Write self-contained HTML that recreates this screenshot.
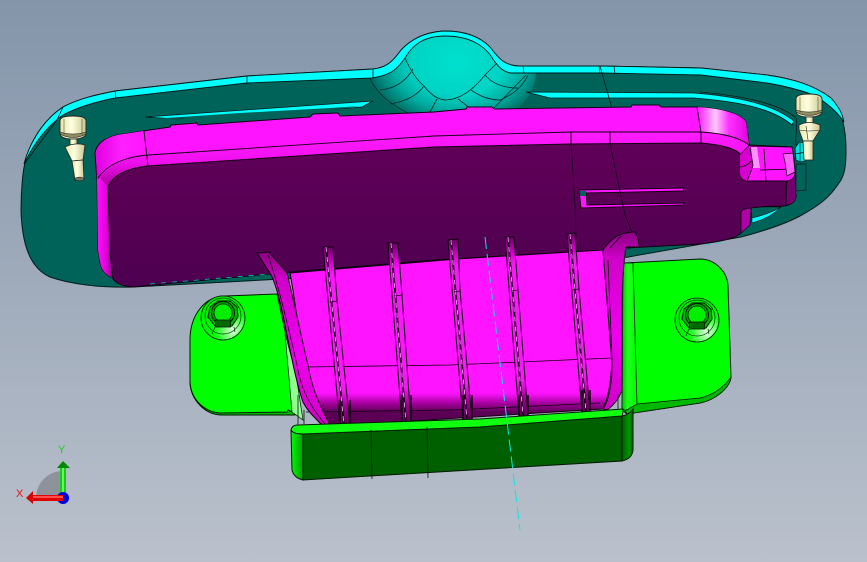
<!DOCTYPE html>
<html><head><meta charset="utf-8"><style>
html,body{margin:0;padding:0;width:867px;height:562px;overflow:hidden;background:#9aa7b8}
svg{display:block}
text{font-family:"Liberation Sans",sans-serif}
</style></head><body>
<svg width="867" height="562" viewBox="0 0 867 562" xmlns="http://www.w3.org/2000/svg">
<defs>
<linearGradient id="bg" x1="0" y1="0" x2="0" y2="1"><stop offset="0" stop-color="#8495aa"/><stop offset="1" stop-color="#bac1cc"/></linearGradient>
<radialGradient id="dome" gradientUnits="userSpaceOnUse" cx="458" cy="62" r="92" gradientTransform="translate(458 62) scale(1 .72) translate(-458 -62)"><stop offset="0" stop-color="#00e0ce"/><stop offset=".5" stop-color="#00d4c4"/><stop offset=".72" stop-color="#00aea2"/><stop offset="1" stop-color="#00635a"/></radialGradient>
<linearGradient id="purple" x1="0" y1="0" x2="0" y2="1"><stop offset="0" stop-color="#600058"/><stop offset="1" stop-color="#4e0050"/></linearGradient>
<linearGradient id="mainm" gradientUnits="userSpaceOnUse" x1="0" y1="385" x2="0" y2="412"><stop offset="0" stop-color="#ff14ff"/><stop offset=".3" stop-color="#ff14ff"/><stop offset=".7" stop-color="#a00098"/><stop offset="1" stop-color="#5c0056"/></linearGradient>
<linearGradient id="rimlow" x1="0" y1="0" x2="0" y2="1"><stop offset="0" stop-color="#ff1cff"/><stop offset=".55" stop-color="#f010ee"/><stop offset="1" stop-color="#a80098"/></linearGradient>
<linearGradient id="hi" gradientUnits="userSpaceOnUse" x1="697" y1="0" x2="750" y2="0"><stop offset="0" stop-color="#ff14ff"/><stop offset=".35" stop-color="#ffc8ff"/><stop offset=".6" stop-color="#ff30ff"/><stop offset="1" stop-color="#e000e0"/></linearGradient>
<linearGradient id="hiL" gradientUnits="userSpaceOnUse" x1="96" y1="0" x2="148" y2="0"><stop offset="0" stop-color="#e000e0"/><stop offset=".5" stop-color="#ff20ff"/><stop offset="1" stop-color="#ff14ff"/></linearGradient>
<radialGradient id="hiS" cx=".55" cy=".5" r=".5"><stop offset="0" stop-color="#ff70ff"/><stop offset="1" stop-color="#ff14ff"/></radialGradient>
<linearGradient id="side" gradientUnits="userSpaceOnUse" x1="96" y1="0" x2="112" y2="0"><stop offset="0" stop-color="#ff14ff"/><stop offset=".6" stop-color="#e800e0"/><stop offset="1" stop-color="#8a0088"/></linearGradient>
<linearGradient id="rib" x1="0" y1="0" x2="0" y2="1"><stop offset="0" stop-color="#680060"/><stop offset=".1" stop-color="#e000d8"/><stop offset=".15" stop-color="#ff14ff"/><stop offset=".8" stop-color="#ff14ff"/><stop offset=".9" stop-color="#9c0090"/><stop offset="1" stop-color="#5c0056"/></linearGradient>
<linearGradient id="fin" x1="0" y1="0" x2="0" y2="1"><stop offset="0" stop-color="#8a0080"/><stop offset=".15" stop-color="#d000c8"/><stop offset=".6" stop-color="#f000f0"/><stop offset="1" stop-color="#d000c8"/></linearGradient>
<linearGradient id="lipL" gradientUnits="userSpaceOnUse" x1="291" y1="0" x2="304" y2="0"><stop offset="0" stop-color="#00ff00"/><stop offset="1" stop-color="#009000"/></linearGradient>
<linearGradient id="lipR" gradientUnits="userSpaceOnUse" x1="622" y1="0" x2="633" y2="0"><stop offset="0" stop-color="#006000"/><stop offset=".7" stop-color="#009800"/><stop offset="1" stop-color="#005000"/></linearGradient>
<linearGradient id="flW" gradientUnits="userSpaceOnUse" x1="623" y1="0" x2="635" y2="0"><stop offset="0" stop-color="#00d000"/><stop offset=".4" stop-color="#20ff20"/><stop offset="1" stop-color="#00ff00"/></linearGradient>
<linearGradient id="bolt" x1="0" y1="0" x2="1" y2="0"><stop offset="0" stop-color="#e8e6a8"/><stop offset=".45" stop-color="#ffffe0"/><stop offset="1" stop-color="#c8c68c"/></linearGradient>
<radialGradient id="wash" cx=".72" cy=".78" r=".7"><stop offset="0" stop-color="#e8ffe8"/><stop offset=".3" stop-color="#70ff70"/><stop offset=".6" stop-color="#00ff00"/><stop offset="1" stop-color="#00ee00"/></radialGradient>
<clipPath id="teal"><path d="M21 210C21 190 23 170 25 163C28 148 40 122 63 107C80 98 100 94 115 91L247 76L373 69C385 68 392 62 398 54C405 44 420 32 445 31C470 31 483 40 490 47C497 56 503 66 520 66L601 66L701 68L767 75C795 79 815 86 831 98C842 110 846 130 846 150C846 165 845 175 839 183C830 197 820 205 800 216C785 224 760 232 741 237L600 262L133 287C100 288 70 284 50 277C30 268 22 245 21 210Z"/></clipPath>
<g id="hb"><circle cx="0" cy="0" r="22" fill="url(#wash)" stroke="#002800" stroke-width=".8"/><path d="M-11 16L-8 9M11 9L12 14" stroke="#002800" stroke-width=".7"/>
<circle cx="0" cy="-2" r="18" fill="none" stroke="#004000" stroke-width=".7"/>
<path d="M-15 -1L-13 -11L-5 -17L7 -17L14 -11L15 -1L9 8L-8 8Z" fill="#00b800" stroke="#001a00" stroke-width="1"/>
<circle cx="0" cy="-5" r="11.5" fill="#00a000" stroke="#001a00" stroke-width="1"/>
<circle cx="0" cy="-5" r="9" fill="#00f000" stroke="#002000" stroke-width=".8"/>
<rect x="-7.5" y="2" width="15" height="7" fill="#006a00" stroke="#001800" stroke-width=".8"/></g>
<g id="yh"><path d="M-13 -7Q-13 -12 0 -12Q13 -12 13 -7L13 5Q13 11 0 11Q-13 11 -13 5Z" fill="url(#bolt)" stroke="#222" stroke-width=".9"/>
<path d="M-13 4Q0 8 13 4L13 6Q0 13 -13 6Z" fill="#8e8c60" stroke="#222" stroke-width=".6"/><path d="M-9 -9L-9 6M9 -9L9 6" stroke="#333" stroke-width=".5" fill="none"/></g>
</defs>
<rect width="867" height="562" fill="url(#bg)"/>

<!-- teal body -->
<path d="M21 210C21 190 23 170 25 163C28 148 40 122 63 107C80 98 100 94 115 91L247 76L373 69C385 68 392 62 398 54C405 44 420 32 445 31C470 31 483 40 490 47C497 56 503 66 520 66L601 66L701 68L767 75C795 79 815 86 831 98C842 110 846 130 846 150C846 165 845 175 839 183C830 197 820 205 800 216C785 224 760 232 741 237L600 262L133 287C100 288 70 284 50 277C30 268 22 245 21 210Z" fill="#00635a" stroke="#001a1a" stroke-width="1"/>
<!-- dome -->
<g clip-path="url(#teal)"><ellipse cx="452" cy="72" rx="84" ry="58" fill="url(#dome)"/></g>
<!-- cyan edge strip -->
<path d="M24 164C28 148 40 122 63 107C80 98 100 94 115 91L247 76L373 69C385 68 392 62 398 54C405 44 420 32 445 31C470 31 483 40 490 47C497 56 503 66 520 66L601 66L701 68L767 75C795 79 815 86 831 98C838 106 842 112 844 122C836 110 825 102 814 95C800 90 785 86 767 83L701 75L601 73L511 73C503 72 497 66 491 56C484 46 470 36 445 36C425 36 413 44 405 58C398 68 392 75 372 78L247 83L115 98C95 102 78 107 63 115C45 128 33 145 24 164Z" fill="#00ffff" stroke="#001a1a" stroke-width=".9"/>
<path d="M25 163L57 120L63 107M115 91L116 98M247 76L247 84M373 69L373 78M523 66L524 73M599 66L600 73M614 66L615 74" fill="none" stroke="#001a1a" stroke-width=".8"/>
<path d="M370 78Q378 98 408 113M405 58Q414 78 424 86Q434 99 445 100Q465 100 485 75Q492 68 497 63M380 90Q402 88 413 69M390 104Q414 100 424 86M437 99L430 112M458 99L470 108M471 90Q485 100 500 100Q520 92 528 75M485 75Q496 88 518 88M526 75L493 109" fill="none" stroke="#002a2a" stroke-width=".8"/>
<!-- slots -->
<path d="M145 117L373 101L362 107L300 112L230 115L177 119Z" fill="#00ffff" stroke="#001a1a" stroke-width=".8"/>
<path d="M152 119L240 113L330 108L360 106L300 114L235 118Z" fill="#00635a"/>
<path d="M526 92L694 93C730 96 770 102 794 121L792 125C770 106 730 101 694 98L550 98Z" fill="#00ffff" stroke="#001a1a" stroke-width=".8"/>
<path d="M700 92C745 96 780 104 796 118C798 125 795 135 796 145" fill="none" stroke="#001a1a" stroke-width=".8"/>
<path d="M600 66L613 112" stroke="#001a1a" stroke-width=".8"/>

<!-- magenta rim -->
<path d="M95 153Q97 140 117 135L143 131L170 127L171 125L197 123L198 125L310 117L313 114L338 113L340 116L434 112L466 109L467 107L492 107L494 109L631 107L632 105L659 105L661 107L697 107C715 108 740 112 746 122L749 145L792 147L795 175L787 181L747 181Q740 178 740 173L740 155Q735 146 701 143L571 144L434 147L147 166Q115 170 108 187L110 253L113 278Q102 274 100 262L98 250L97 180Z" fill="#ff14ff" stroke="#110011" stroke-width="1"/>
<path d="M697 107C715 108 740 112 746 122L749 145Q735 134 701 132Z" fill="url(#hi)"/>
<path d="M96 154Q97 140 117 135L143 131L148 155Q115 158 100 178L97 180Z" fill="url(#hiL)"/>
<path d="M148 155L434 136L571 132L701 132Q735 134 749 145L741 155Q735 146 701 143L571 144L434 147L147 166Q115 170 108 187L100 178Q115 158 148 155Z" fill="url(#rimlow)"/>
<path d="M97 180L100 178L108 187L110 253L113 278Q102 274 100 262L98 250Z" fill="url(#side)"/>
<path d="M98 178Q112 158 148 155L434 136L571 132L701 132Q735 134 749 145L741 155M144 131L148 166M571 132L571 144M610 132L610 144M697 107L701 132L701 143" fill="none" stroke="#110011" stroke-width=".9"/>
<!-- purple plate -->
<path d="M108 187Q115 170 147 166L434 147L571 144L701 143Q735 146 741 155L740 173Q741 180 747 181L787 181Q793 180 795 175L796 197Q795 204 784 206Q765 206 751 208Q741 209 741 213L741 233Q735 240 700 244L627 248L603 250L434 260L290 272L133 287Q118 286 113 279L110 253Z" fill="url(#purple)" stroke="#110011" stroke-width="1"/>
<path d="M150 284L270 274M705 245L725 242" stroke="#00d8d8" stroke-width=".7" stroke-dasharray="5 6" fill="none"/>
<!-- tab details -->
<path d="M740 155L749 146L792 147Q795 160 795 172Q795 180 787 181L747 181Q740 179 740 173Z" fill="#ff14ff" stroke="#110011" stroke-width=".9"/>
<path d="M749 146L757 147L760 168L752 168L747 181Q740 179 740 173L740 155Z" fill="#d800d0"/><path d="M751 147L757 147L760 168L753 168Z" fill="#ff90ff"/>
<path d="M750 148L753 165Q750 175 747 181M740 167Q748 166 752 160M764 149L766 181M760 170L794 169M786 181L786 205" fill="none" stroke="#110011" stroke-width=".8"/>
<path d="M783 154L793 153L795 172L787 176L785 162Z" fill="#ff60ff" stroke="#110011" stroke-width=".7"/>
<path d="M787 181Q793 180 795 175L796 197Q795 204 786 205Z" fill="#740070" stroke="#110011" stroke-width=".7"/>
<path d="M741 213Q741 209 751 208L750 225L741 233Z" fill="#b000a8" stroke="#110011" stroke-width=".8"/>
<path d="M751 208Q765 206 781 207Q770 215 752 222Z" fill="#00635a" stroke="#110011" stroke-width=".8"/>
<path d="M752 218Q770 214 781 207Q770 218 752 223Z" fill="#00ffff" stroke="#110011" stroke-width=".5"/>
<path d="M796 164L806 164L806 190L796 191Z" fill="#00635a" stroke="#001a1a" stroke-width=".7"/>
<path d="M795 148L799 142L805 143L806 161L800 162L796 160Z" fill="#00e0e0" stroke="#001a1a" stroke-width=".8"/>
<path d="M795 154L806 152M800 143L800 162" stroke="#001a1a" stroke-width=".7" fill="none"/>
<!-- inner slot -->
<path d="M579 190L684 188L683 191L586 193L587 205L684 203L684 205L581 208Z" fill="#ff14ff" stroke="#110011" stroke-width=".9"/>
<rect x="580" y="191" width="6" height="5" fill="#00635a"/>
<path d="M571 144L575 205L576 238M610 144L625 215L638 247" fill="none" stroke="#1a001a" stroke-width=".8"/>

<!-- flanges -->
<path d="M190 383C191 400 205 415 222 415L295 415L300 410L290 300L220 296Z" fill="#00b800" stroke="#001800" stroke-width="1"/>
<path d="M190 340C190 315 205 296 225 296L277 294L287 340L292 412L288 410L287 412L220 413C205 412 190 400 190 380Z" fill="#00ff00" stroke="#001800" stroke-width="1"/>
<path d="M285 333L296 375L303 420L292 412Z" fill="#90ff90" stroke="#001800" stroke-width=".7"/>
<path d="M625 263L700 259C715 259 728 272 728 287L731 377C730 388 715 400 700 403L627 414L622 410Z" fill="#00ff00" stroke="#001800" stroke-width="1"/>
<path d="M623 263L633 263L637 405L627 410L622 410Z" fill="url(#flW)" stroke="#001800" stroke-width=".8"/>
<path d="M731 377C730 388 715 400 700 403L627 414L625 411L637 404L700 398Q720 393 731 377Z" fill="#00b800" stroke="#001800" stroke-width=".8"/>
<use href="#hb" x="223" y="318"/>
<use href="#hb" x="697" y="320"/>

<!-- main magenta -->
<path d="M290 273L457 259L603 250L612 363Q612 395 603 409L330 426C318 410 306 385 303 365C300 340 295 300 290 273Z" fill="url(#mainm)" stroke="#110011" stroke-width="1"/>
<path d="M305 367L450 365L520 362L612 358M306 412L450 410L600 403" fill="none" stroke="#110011" stroke-width=".8"/>
<!-- ribs -->
<g stroke="#110011" stroke-width="1" fill="url(#rib)">
<path d="M323 247L333 247L337 300L350 425L340 425Z"/>
<path d="M388 243L398 243L402 295L411 423L402 423Z"/>
<path d="M448 240L458 239L460 290L472 420L463 420Z"/>
<path d="M505 237L514 237L518 290L528 416L519 416Z"/>
<path d="M567 234L575 233L579 289L590 412L582 412Z"/>
</g>
<g fill="none">
<path d="M326 247L344 425M391 243L406 423M451 240L467 420M508 237L523 416M570 234L586 412" stroke="#110011" stroke-width="1.8"/>
<path d="M326 247L344 425M391 243L406 423M451 240L467 420M508 237L523 416M570 234L586 412" stroke="#ffc0ff" stroke-width=".8" stroke-dasharray="5 5"/>
<path d="M340 400L340 425M350 400L350 425M402 395L402 423M411 395L411 423M463 395L463 420M472 395L472 420M519 395L519 416M528 395L528 416M582 390L582 412M590 390L590 412" stroke="#110011" stroke-width="1.5"/>
<path d="M330 302L337 301M395 296L402 295M454 292L461 291M512 291L518 290M572 290L579 289" stroke="#110011" stroke-width=".8"/>
</g>
<!-- left fin -->
<path d="M257 253L269 252L287 273C296 310 303 345 308 365C312 390 322 410 330 425L322 425C312 415 307 410 303 402C297 385 292 360 287 335C282 310 276 280 268 270Z" fill="url(#fin)" stroke="#110011" stroke-width="1"/>
<path d="M268 255C280 290 290 335 297 365C300 385 308 405 326 425" fill="none" stroke="#110011" stroke-width=".8"/>
<!-- right fin -->
<path d="M603 250C610 240 618 232 635 232Q639 238 639 247L626 247Q622 270 622 320L622 390Q618 402 607 410L603 409Q612 395 612 363Z" fill="url(#fin)" stroke="#110011" stroke-width="1"/>
<path d="M610 248L621 236M608 260L612 360Q610 395 604 405" fill="none" stroke="#110011" stroke-width=".8"/>

<!-- lip and front -->
<path d="M303 434L622 416L622 461L303 480Z" fill="#006000" stroke="#001800" stroke-width="1"/>
<path d="M291 430L292 470Q294 478 303 480L303 434Z" fill="url(#lipL)" stroke="#001800" stroke-width="1"/>
<path d="M622 416Q629 415 633 409L633 450Q632 459 622 461Z" fill="url(#lipR)" stroke="#001800" stroke-width="1"/>
<path d="M291 430Q292 425 298 425L480 419L623 409Q623 414 622 416L480 427L303 434Q293 434 291 430Z" fill="#10ff10" stroke="#001800" stroke-width="1"/>
<path d="M371 430L372 479M427 427L428 478" stroke="#001800" stroke-width=".8"/>
<path d="M298 395L298 425M304 410L304 424M618 395L618 409" stroke="#001800" stroke-width=".8"/>

<!-- axis dashed -->
<path d="M485 237L520 530" stroke="#00e8e8" stroke-width="1" stroke-dasharray="12 5" fill="none"/>

<!-- yellow pins -->
<g>
<use href="#yh" x="73" y="128"/>
<rect x="70" y="139" width="7" height="7" fill="url(#bolt)" stroke="#222" stroke-width=".8"/>
<path d="M65 147Q75 142 85 145L83 160L72 161Z" fill="url(#bolt)" stroke="#222" stroke-width=".8"/>
<path d="M72 161L83 160L84 179L75 180Z" fill="url(#bolt)" stroke="#222" stroke-width=".8"/>
<ellipse cx="79.5" cy="179" rx="4.5" ry="1.8" fill="#77755a" stroke="#222" stroke-width=".6"/>
</g>
<g>
<use href="#yh" x="809" y="106"/>
<rect x="806" y="117" width="7" height="8" fill="url(#bolt)" stroke="#222" stroke-width=".8"/>
<path d="M799 125Q809 120 820 125L820 130L813 141L803 141L799 130Z" fill="url(#bolt)" stroke="#222" stroke-width=".8"/>
<path d="M799 130Q809 132 820 130M806 126L808 140" stroke="#222" stroke-width=".6" fill="none"/>
<path d="M803 141L813 141L813 160L804 160Z" fill="url(#bolt)" stroke="#222" stroke-width=".8"/>
</g>

<!-- triad -->
<path d="M63 498L36 498A27 27 0 0 1 63 471Z" fill="#8e929a"/>
<rect x="60" y="465" width="6" height="32" fill="#10d010"/><rect x="62" y="465" width="2" height="32" fill="#70f070"/>
<path d="M57 468L63 461L70 468Z" fill="#008800"/>
<circle cx="63" cy="498" r="6" fill="#0000e0"/>
<rect x="33" y="495" width="30" height="6" fill="#e00000"/><rect x="33" y="496" width="30" height="2" fill="#ff5050"/>
<path d="M33 491L26 498L33 504Z" fill="#d80000"/>
<text x="16" y="497" font-size="11" fill="#ee1111">X</text>
<text x="58" y="453" font-size="11" fill="#22cc22">Y</text>
</svg>
</body></html>
